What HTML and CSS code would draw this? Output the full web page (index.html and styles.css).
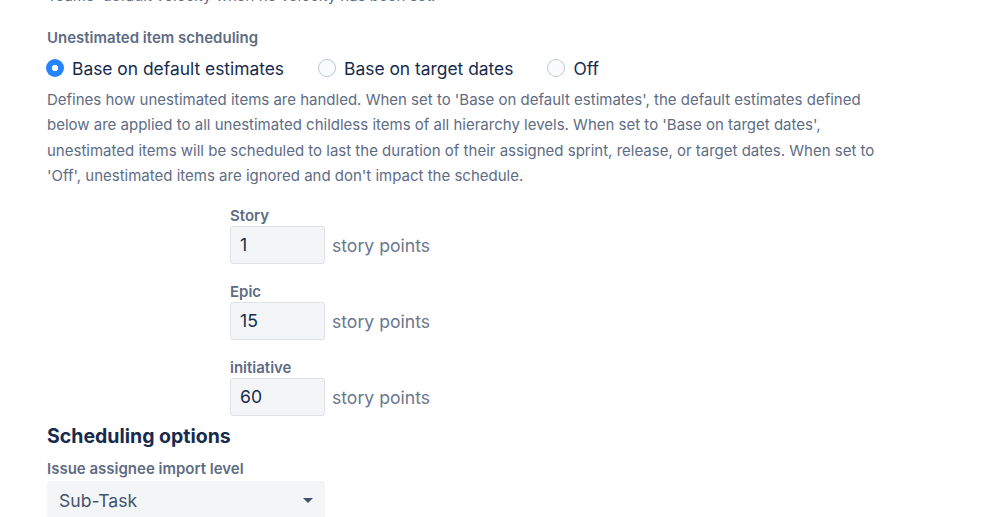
FILE: index.html
```html
<!DOCTYPE html>
<html>
<head>
<meta charset="utf-8">
<link rel="stylesheet" href="styles.css">
</head>
<body>
<div class="page">
  <p class="cut">Teams' default velocity when no velocity has been set.</p>

  <div class="field-label first">Unestimated item scheduling</div>
  <div class="radios">
    <label class="radio"><span class="dot checked"></span><span>Base on default estimates</span></label>
    <label class="radio"><span class="dot"></span><span>Base on target dates</span></label>
    <label class="radio"><span class="dot"></span><span>Off</span></label>
  </div>
  <p class="desc">Defines how unestimated items are handled. When set to 'Base on default estimates', the default estimates defined below are applied to all unestimated childless items of all hierarchy levels. When set to 'Base on target dates', unestimated items will be scheduled to last the duration of their assigned sprint, release, or target dates. When set to 'Off', unestimated items are ignored and don't impact the schedule.</p>

  <div class="estimates">
    <div class="est">
      <div class="field-label">Story</div>
      <div class="est-row"><div class="input">1</div><span class="unit">story points</span></div>
    </div>
    <div class="est">
      <div class="field-label">Epic</div>
      <div class="est-row"><div class="input">15</div><span class="unit">story points</span></div>
    </div>
    <div class="est">
      <div class="field-label">initiative</div>
      <div class="est-row"><div class="input">60</div><span class="unit">story points</span></div>
    </div>
  </div>

  <h2 class="heading">Scheduling options</h2>
  <div class="field-label">Issue assignee import level</div>
  <div class="select"><span>Sub-Task</span><span class="caret"></span></div>
</div>
</body>
</html>
```

FILE: styles.css
```css
html, body {
  margin: 0;
  padding: 0;
  background: #ffffff;
  overflow: hidden;
}
body {
  font-family: Inter, "Liberation Sans", Arial, sans-serif;
  color: #172b4d;
}
.page {
  padding-left: 47px;
  width: 850px;
}
.cut {
  margin: -14px 0 0 0;
  font-size: 15px;
  line-height: 20px;
  color: #5e6c84;
}
.field-label {
  font-size: 15px;
  font-weight: 600;
  color: #5e6c84;
  line-height: 20px;
}
.field-label.first {
  margin-top: 22px;
}
.radios {
  display: flex;
  align-items: center;
  gap: 35px;
  height: 40px;
}
.radio {
  display: flex;
  align-items: center;
  gap: 8px;
  font-size: 17.4px;
  color: #172b4d;
}
.dot {
  box-sizing: border-box;
  width: 18px;
  height: 18px;
  border-radius: 50%;
  border: 1.5px solid #c1c7d0;
  background: #fafbfc;
  margin-left: -1px;
  display: inline-block;
}
.dot.checked {
  border: none;
  background: radial-gradient(circle, #ffffff 0 2.8px, #2684ff 3.4px);
}
.desc {
  margin: -1px 0 0 0;
  font-size: 15px;
  line-height: 25.3px;
  color: #5e6c84;
}
.estimates {
  margin-left: 183px;
  margin-top: 18px;
  display: flex;
  flex-direction: column;
  gap: 18px;
}
.est-row {
  display: flex;
  align-items: center;
  gap: 7px;
}
.input {
  box-sizing: border-box;
  width: 95px;
  height: 38px;
  border: 1.5px solid #dfe1e6;
  border-radius: 3px;
  background: #f4f5f7;
  font-size: 17.6px;
  padding-left: 9px;
  line-height: 35px;
  color: #172b4d;
}
.unit {
  font-size: 17.6px;
  color: #6b778c;
}
.heading {
  margin: 6px 0 0 0;
  font-size: 19.5px;
  line-height: 28px;
  font-weight: 700;
  color: #172b4d;
}
.heading + .field-label {
  margin-top: 9px;
}
.select {
  margin-top: 2px;
  box-sizing: border-box;
  width: 278px;
  height: 38px;
  border-radius: 3px;
  background: #f4f5f7;
  display: flex;
  align-items: center;
  justify-content: space-between;
  padding: 0 12px 0 12px;
  font-size: 17.6px;
  color: #42526e;
}
.caret {
  width: 0;
  height: 0;
  border-left: 5px solid transparent;
  border-right: 5px solid transparent;
  border-top: 5px solid #42526e;
}
```
